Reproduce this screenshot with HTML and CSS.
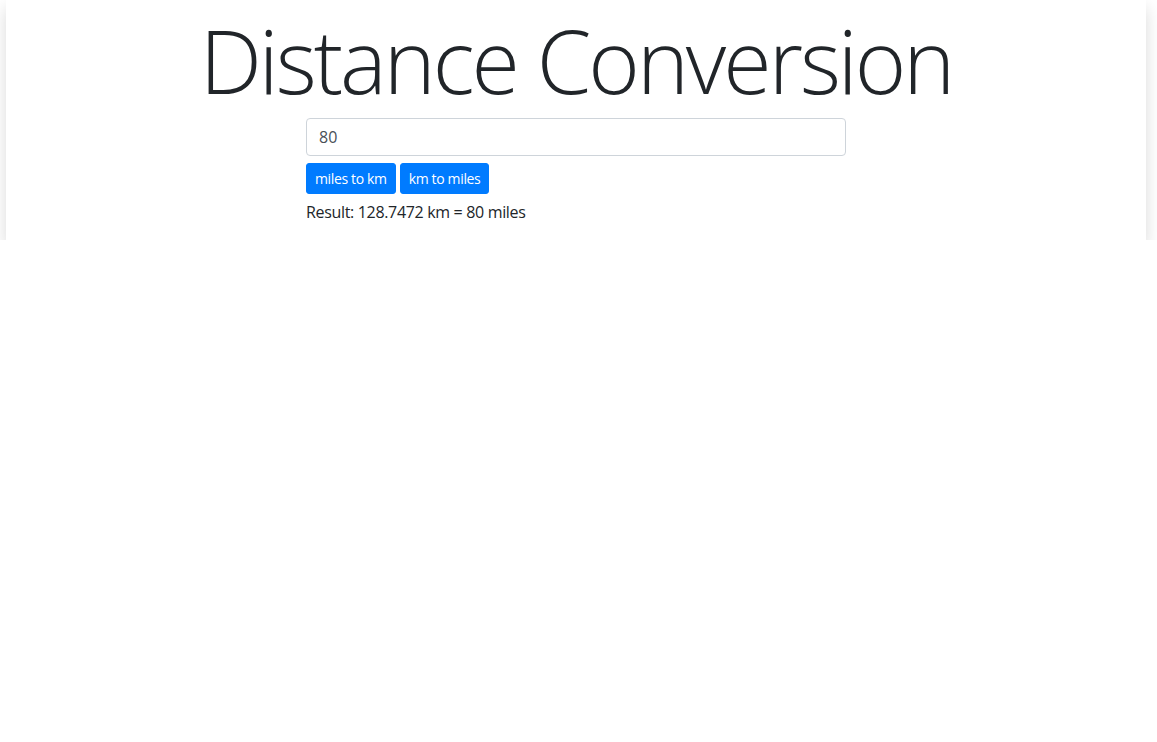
FILE: index.html
```html
<!DOCTYPE html>
<html lang="en">
<head>
<meta charset="utf-8">
<title>Distance Conversion</title>
<link rel="stylesheet" href="styles.css">
</head>
<body>
<main class="card">
  <h1 class="title">Distance Conversion</h1>
  <div class="form">
    <input class="field" type="text" value="80">
    <div class="actions">
      <button class="btn">miles to km</button>
      <button class="btn">km to miles</button>
    </div>
    <p class="result">Result: 128.7472 km = 80 miles</p>
  </div>
</main>
</body>
</html>
```
FILE: styles.css
```css
* { box-sizing: border-box; }
html, body { margin: 0; padding: 0; background: #fff; }
body {
  font-family: "Open Sans", "Noto Sans", sans-serif;
  color: #212529;
  font-size: 16px;
  line-height: 1.5;
}
.card {
  width: 1140px;
  margin-left: 6px;
  background: #fff;
  box-shadow: 0 8px 16px rgba(0,0,0,.15);
  padding: 0 0 16px;
}
.title {
  margin: 0 0 -2px;
  text-align: center;
  font-weight: 300;
  font-size: 88px;
  letter-spacing: -3px;
  line-height: 120px;
  color: #212529;
}
.form {
  width: 540px;
  margin: 0 auto;
}
.field {
  display: block;
  width: 100%;
  height: 38px;
  padding: 6px 12px;
  font: inherit;
  color: #495057;
  border: 1px solid #ced4da;
  border-radius: 4px;
  background: #fff;
}
.actions {
  display: flex;
  gap: 4px;
  margin-top: 7px;
}
.btn {
  font: inherit;
  font-size: 14px;
  letter-spacing: -0.35px;
  line-height: 21px;
  padding: 4px 8px;
  color: #fff;
  background: #007bff;
  border: 1px solid #007bff;
  border-radius: 3px;
}
.result {
  margin: 6px 0 0;
  letter-spacing: -0.33px;
}
```
